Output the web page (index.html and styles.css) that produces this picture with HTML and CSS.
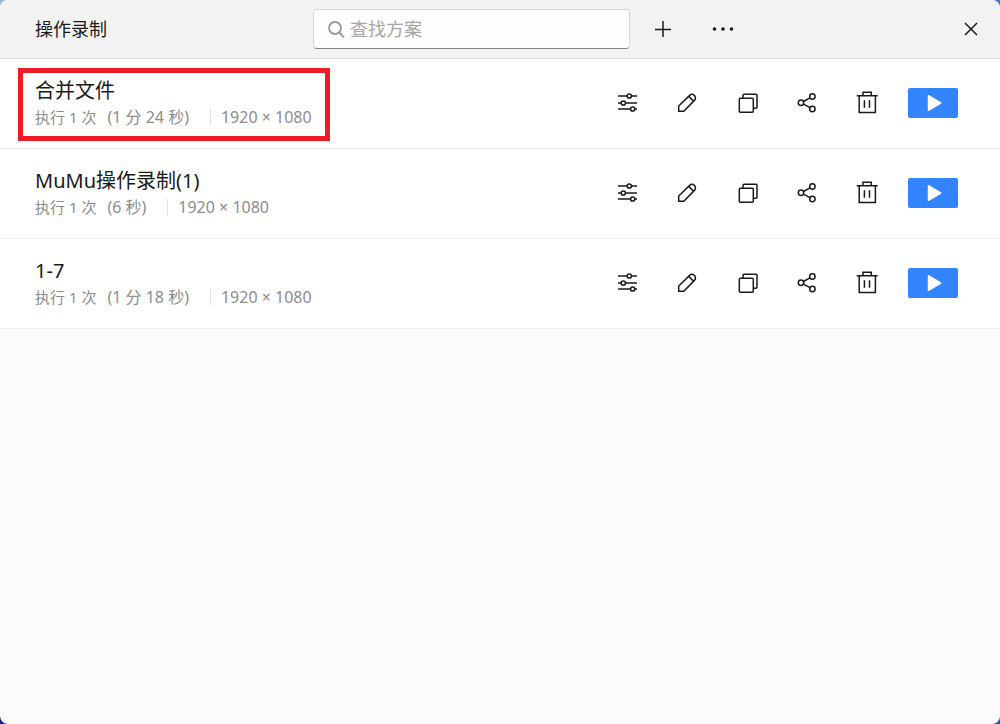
FILE: index.html
```html
<!DOCTYPE html>
<html lang="zh-CN">

<head>
  <meta charset="utf-8">
  <title>操作录制</title>
  <link rel="stylesheet" href="styles.css">
</head>

<body>

  <!-- shared icons -->
  <svg class="sprite" aria-hidden="true">
    <symbol id="icon-settings" viewBox="0 0 24 24">
      <path d="M3 5h9M17 5h5M3 12h3M11 12h11M3 18h12M20 18h2" />
      <circle cx="14.3" cy="5" r="2.1" />
      <circle cx="8.3" cy="12" r="2.1" />
      <circle cx="17.7" cy="18" r="2.1" />
    </symbol>
    <symbol id="icon-edit" viewBox="0 0 24 24">
      <path d="M3.7 20.3V15L14.6 4.4a3.3 3.3 0 0 1 4.8 0a3.5 3.5 0 0 1 0 5L8.8 20.3zM13.7 5.4L18.6 10.3" />
    </symbol>
    <symbol id="icon-copy" viewBox="0 0 24 24">
      <rect x="4.3" y="7.3" width="14" height="14" rx="1" />
      <path d="M8 7.3V4.3a1 1 0 0 1 1-1h12a1 1 0 0 1 1 1v12a1 1 0 0 1-1 1h-2.7" />
    </symbol>
    <symbol id="icon-share" viewBox="0 0 24 24">
      <circle cx="6" cy="11.8" r="2.7" />
      <circle cx="17.4" cy="5.5" r="2.7" />
      <circle cx="17.4" cy="18" r="2.7" />
      <path d="M8.4 10.5L15 6.8M8.4 13.1L15 16.7" />
    </symbol>
    <symbol id="icon-delete" viewBox="0 0 24 24">
      <path d="M1.7 4.7h21M8 4.7V1.2h8.3v3.5M4.2 4.7v16.8h16.2V4.7M9.4 9.3v7.4M14.5 9.3v7.4" />
    </symbol>
    <symbol id="icon-play" viewBox="0 0 24 24">
      <path d="M7.5 4.7v14.6L19.6 12z" />
    </symbol>
  </svg>

  <div class="window">
    <header class="titlebar">
      <h1 class="app_title">操作录制</h1>
      <div class="search">
        <svg class="search_icon" viewBox="0 0 20 20" aria-hidden="true">
          <circle cx="9" cy="9" r="6" />
          <path d="M13.3 13.5L18 18.3" />
        </svg>
        <input class="search_input" type="text" placeholder="查找方案" aria-label="查找方案">
      </div>
      <div class="title_buttons">
        <button class="title_button" aria-label="新建">
          <svg viewBox="0 0 24 24"><path d="M12 4v16M4 12.5h16" /></svg>
        </button>
        <button class="title_button" aria-label="更多">
          <svg class="dots" viewBox="0 0 24 24">
            <circle cx="3.5" cy="12" r="1.8" />
            <circle cx="12" cy="12" r="1.8" />
            <circle cx="20.5" cy="12" r="1.8" />
          </svg>
        </button>
        <button class="title_button close" aria-label="关闭">
          <svg viewBox="0 0 24 24"><path d="M6 6l12 12M18 6L6 18" /></svg>
        </button>
      </div>
    </header>

    <main>
      <ul class="list">
        <li class="row">
          <div class="info marked">
            <h2 class="name">合并文件</h2>
            <p class="detail"><span>执行 1 次</span><span class="time">(1 分 24 秒)</span><span class="size">1920 × 1080</span></p>
          </div>
          <div class="actions">
            <button class="action" aria-label="设置"><svg><use href="#icon-settings" /></svg></button>
            <button class="action" aria-label="编辑"><svg><use href="#icon-edit" /></svg></button>
            <button class="action" aria-label="复制"><svg><use href="#icon-copy" /></svg></button>
            <button class="action" aria-label="分享"><svg><use href="#icon-share" /></svg></button>
            <button class="action" aria-label="删除"><svg><use href="#icon-delete" /></svg></button>
            <button class="play" aria-label="执行"><svg><use href="#icon-play" /></svg></button>
          </div>
        </li>
        <li class="row">
          <div class="info">
            <h2 class="name">MuMu操作录制(1)</h2>
            <p class="detail"><span>执行 1 次</span><span class="time">(6 秒)</span><span class="size">1920 × 1080</span></p>
          </div>
          <div class="actions">
            <button class="action" aria-label="设置"><svg><use href="#icon-settings" /></svg></button>
            <button class="action" aria-label="编辑"><svg><use href="#icon-edit" /></svg></button>
            <button class="action" aria-label="复制"><svg><use href="#icon-copy" /></svg></button>
            <button class="action" aria-label="分享"><svg><use href="#icon-share" /></svg></button>
            <button class="action" aria-label="删除"><svg><use href="#icon-delete" /></svg></button>
            <button class="play" aria-label="执行"><svg><use href="#icon-play" /></svg></button>
          </div>
        </li>
        <li class="row">
          <div class="info">
            <h2 class="name">1-7</h2>
            <p class="detail"><span>执行 1 次</span><span class="time">(1 分 18 秒)</span><span class="size">1920 × 1080</span></p>
          </div>
          <div class="actions">
            <button class="action" aria-label="设置"><svg><use href="#icon-settings" /></svg></button>
            <button class="action" aria-label="编辑"><svg><use href="#icon-edit" /></svg></button>
            <button class="action" aria-label="复制"><svg><use href="#icon-copy" /></svg></button>
            <button class="action" aria-label="分享"><svg><use href="#icon-share" /></svg></button>
            <button class="action" aria-label="删除"><svg><use href="#icon-delete" /></svg></button>
            <button class="play" aria-label="执行"><svg><use href="#icon-play" /></svg></button>
          </div>
        </li>
      </ul>
    </main>
  </div>

</body>

</html>
```
FILE: styles.css
```css
* {
  box-sizing: border-box;
}

/* desktop colours behind the rounded window corners */
body {
  margin: 0;
  background:
    linear-gradient(90deg, #9db4d0 50%, #2f74d8 50%) top / 100% 50% no-repeat,
    linear-gradient(90deg, #0a1f8a 50%, #2257b8 50%) bottom / 100% 50% no-repeat;
  font-family: "Noto Sans", "Noto Sans CJK SC", sans-serif;
  color: #1a1a1a;
}

h1,
h2,
p,
ul {
  margin: 0;
  padding: 0;
  font-weight: normal;
}

button {
  padding: 0;
  border: none;
  background: none;
  color: inherit;
  cursor: pointer;
}

svg {
  display: block;
  width: 24px;
  height: 24px;
  fill: none;
  stroke: currentColor;
  stroke-width: 1.5;
}

.sprite {
  display: none;
}

.window {
  min-height: 100vh;
  border-radius: 8px;
  overflow: hidden;
  background: #fbfbfb;
}

.titlebar {
  display: grid;
  grid-template-columns: 278px minmax(160px, 317px) 1fr;
  align-items: center;
  height: 59px;
  padding-left: 35px;
  background: #f2f2f2;
  border-bottom: 1px solid #dcdcdc;
}

.app_title {
  font-size: 18px;
  line-height: 28px;
}

.search {
  display: flex;
  align-items: center;
  gap: 4px;
  height: 40px;
  padding: 0 12px;
  background: #fdfdfd;
  border: 1px solid #d6d6d6;
  border-bottom-color: #868686;
  border-radius: 4px;
}

.search_icon {
  flex: none;
  width: 20px;
  height: 20px;
  color: #999999;
  stroke-width: 1.8;
}

.search_input {
  flex: 1;
  min-width: 0;
  padding: 0;
  border: none;
  outline: none;
  background: none;
  font-family: inherit;
  font-size: 18px;
  line-height: 28px;
}

.search_input::placeholder {
  color: #a6a6a6;
}

.title_buttons {
  display: flex;
  gap: 20px;
  padding: 0 9px 0 13px;
}

.title_button {
  display: grid;
  place-items: center;
  width: 40px;
  height: 40px;
}

.dots {
  fill: currentColor;
  stroke: none;
}

.close {
  margin-left: auto;
}

.list {
  list-style: none;
}

.row {
  display: flex;
  align-items: center;
  justify-content: space-between;
  min-height: 90px;
  padding: 0 42px 1px 35px;
  background: #ffffff;
  border-bottom: 1px solid #eeeeee;
}

.info {
  position: relative;
}

/* red frame round the scheme */
.marked::after {
  content: "";
  position: absolute;
  inset: -9px -18px -12px -17px;
  border: 5px solid #ed1c24;
}

.name {
  font-size: 20px;
  line-height: 28px;
}

.detail {
  display: flex;
  align-items: center;
  font-size: 15px;
  line-height: 24px;
  color: #8c8c8c;
}

.time {
  margin: 0 21px 0 11px;
  font-size: 16px;
}

.size {
  padding-left: 10px;
  border-left: 1px solid #e0e0e0;
  font-size: 16px;
  line-height: 16px;
}

.actions {
  display: flex;
  align-items: center;
}

.action,
.play {
  display: grid;
  place-items: center;
  height: 30px;
}

.action {
  width: 60px;
}

.play {
  width: 50px;
  margin-left: 11px;
  border-radius: 2px;
  background: #3385ff;
  color: #ffffff;
}

.play svg {
  fill: currentColor;
  stroke-linejoin: round;
}
```
